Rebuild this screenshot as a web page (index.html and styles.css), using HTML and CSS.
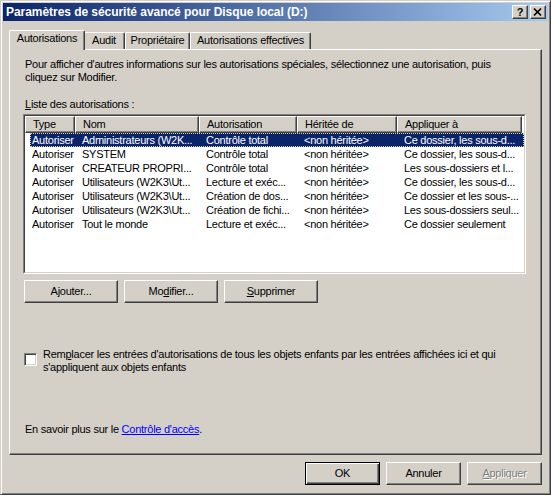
FILE: index.html
```html
<!DOCTYPE html>
<html lang="fr">
<head>
<meta charset="utf-8">
<title>Paramètres de sécurité avancé</title>
<link rel="stylesheet" href="styles.css">
</head>
<body>
<div class="window">
  <div class="titlebar">
    <span class="title">Paramètres de sécurité avancé pour Disque local (D:)</span>
    <div class="caption-btns">
      <span class="cap-btn help">?</span>
      <span class="cap-btn close"><svg width="14" height="12" viewBox="0 0 14 12"><path d="M3 2.5 L10 9.5 M10 2.5 L3 9.5" stroke="#000" stroke-width="1.7" fill="none"/></svg></span>
    </div>
  </div>
  <div class="client">
    <div class="tabs">
      <div class="tab sel t1">Autorisations</div>
      <div class="tab t2">Audit</div>
      <div class="tab t3">Propriétaire</div>
      <div class="tab t4">Autorisations effectives</div>
    </div>
    <div class="panel">
      <p class="desc">Pour afficher d'autres informations sur les autorisations spéciales, sélectionnez une autorisation, puis<br>cliquez sur Modifier.</p>
      <div class="label"><u>L</u>iste des autorisations :</div>
      <div class="list">
        <div class="list-inner">
          <div class="header">
            <div class="hcell">Type</div>
            <div class="hcell">Nom</div>
            <div class="hcell">Autorisation</div>
            <div class="hcell">Héritée de</div>
            <div class="hcell">Appliquer à</div>
          </div>
          <div class="rows">
            <div class="row sel"><span>Autoriser</span><span>Administrateurs (W2K...</span><span>Contrôle total</span><span>&lt;non héritée&gt;</span><span>Ce dossier, les sous-d...</span></div>
            <div class="row"><span>Autoriser</span><span>SYSTEM</span><span>Contrôle total</span><span>&lt;non héritée&gt;</span><span>Ce dossier, les sous-d...</span></div>
            <div class="row"><span>Autoriser</span><span>CREATEUR PROPRI...</span><span>Contrôle total</span><span>&lt;non héritée&gt;</span><span>Les sous-dossiers et l...</span></div>
            <div class="row"><span>Autoriser</span><span>Utilisateurs (W2K3\Ut...</span><span>Lecture et exéc...</span><span>&lt;non héritée&gt;</span><span>Ce dossier, les sous-d...</span></div>
            <div class="row"><span>Autoriser</span><span>Utilisateurs (W2K3\Ut...</span><span>Création de dos...</span><span>&lt;non héritée&gt;</span><span>Ce dossier et les sous-...</span></div>
            <div class="row"><span>Autoriser</span><span>Utilisateurs (W2K3\Ut...</span><span>Création de fichi...</span><span>&lt;non héritée&gt;</span><span>Les sous-dossiers seul...</span></div>
            <div class="row"><span>Autoriser</span><span>Tout le monde</span><span>Lecture et exéc...</span><span>&lt;non héritée&gt;</span><span>Ce dossier seulement</span></div>
          </div>
        </div>
      </div>
      <div class="btn-row">
        <button class="btn wide">A<u>j</u>outer...</button>
        <button class="btn wide">Mo<u>d</u>ifier...</button>
        <button class="btn wide"><u>S</u>upprimer</button>
      </div>
      <div class="check-row">
        <span class="checkbox"></span>
        <span class="check-label">Rem<u>p</u>lacer les entrées d'autorisations de tous les objets enfants par les entrées affichées ici et qui<br>s'appliquent aux objets enfants</span>
      </div>
      <div class="info">En savoir plus sur le <a class="link" href="#">Contrôle d'accès</a>.</div>
    </div>
    <div class="dlg-btns">
      <button class="btn default">OK</button>
      <button class="btn">Annuler</button>
      <button class="btn disabled"><u>A</u>ppliquer</button>
    </div>
  </div>
</div>
</body>
</html>
```
FILE: styles.css
```css
* { box-sizing: border-box; }
html, body { margin: 0; padding: 0; background: #d4d0c8; }
body {
  font-family: "Liberation Sans", Arial, sans-serif;
  font-size: 11px;
  line-height: 13px;
  letter-spacing: -0.25px;
  color: #000;
}
.window {
  width: 551px;
  height: 495px;
  background: #d4d0c8;
  border: 1px solid;
  border-color: #d4d0c8 #404040 #404040 #d4d0c8;
  box-shadow: inset 1px 1px #fff, inset -1px -1px #808080;
  padding: 2px;
  display: flex;
  flex-direction: column;
}
.titlebar {
  height: 18px;
  flex: none;
  background: linear-gradient(to right, #0a246a, #a6caf0);
  display: flex;
  align-items: flex-start;
  justify-content: space-between;
  padding-left: 3px;
  padding-right: 2px;
}
.title {
  color: #fff;
  font-weight: bold;
  font-size: 12px;
  letter-spacing: -0.05px;
  line-height: 18px;
  white-space: nowrap;
}
.caption-btns {
  display: flex;
  gap: 2px;
  margin-top: 2px;
}
.cap-btn {
  width: 16px;
  height: 14px;
  background: #d4d0c8;
  border: 1px solid;
  border-color: #fff #404040 #404040 #fff;
  box-shadow: inset -1px -1px #808080;
  display: flex;
  align-items: center;
  justify-content: center;
}
.help {
  font-weight: bold;
  font-size: 11px;
  line-height: 12px;
  letter-spacing: 0;
  padding-bottom: 1px;
}
.close svg { display: block; }
.client {
  flex: 1;
  padding: 9px 6px 0 6px;
  display: flex;
  flex-direction: column;
}
.tabs {
  display: flex;
  align-items: flex-end;
  height: 19px;
  padding-left: 2px;
  position: relative;
  z-index: 2;
}
.tab {
  height: 17px;
  border-top: 1px solid #fff;
  border-left: 1px solid #fff;
  border-right: 1px solid #404040;
  box-shadow: inset -1px 0 #808080;
  border-top-left-radius: 2px;
  border-top-right-radius: 2px;
  padding-top: 1px;
  text-align: center;
  white-space: nowrap;
  background: #d4d0c8;
  align-self: flex-end;
}
.t1 { width: 72px; }
.t2 { width: 42px; }
.t3 { width: 65px; }
.t4 { width: 121px; }
.tab.sel {
  width: 76px;
  height: 20px;
  margin: 0 -2px -1px -2px;
  position: relative;
  z-index: 3;
}
.panel {
  height: 406px;
  border: 1px solid;
  border-color: #fff #404040 #404040 #fff;
  box-shadow: inset -1px -1px #808080;
  padding: 8px 14px 0 14px;
  display: flex;
  flex-direction: column;
  align-items: flex-start;
}
.desc {
  margin: 0 0 0 1px;
  white-space: nowrap;
}
.label {
  margin-top: 14px;
  margin-left: 1px;
}
.list {
  margin-top: 3px;
  margin-left: -1px;
  width: 503px;
  height: 160px;
  border: 1px solid;
  border-color: #808080 #fff #fff #808080;
}
.list-inner {
  height: 100%;
  border: 1px solid;
  border-color: #404040 #d4d0c8 #d4d0c8 #404040;
  background: #fff;
  overflow: hidden;
}
.header {
  display: grid;
  grid-template-columns: 50px 124px 98px 100px 125px;
  height: 17px;
}
.hcell {
  height: 17px;
  background: #d4d0c8;
  border: 1px solid;
  border-color: #fff #404040 #404040 #fff;
  box-shadow: inset -1px -1px #808080;
  padding: 1px 0 0 7px;
  white-space: nowrap;
  overflow: hidden;
}
.rows { display: flex; flex-direction: column; }
.row {
  margin-left: 5px;
  display: grid;
  grid-template-columns: 45px 124px 98px 100px 125px;
  height: 14px;
  line-height: 14px;
}
.row span {
  white-space: nowrap;
  overflow: hidden;
  padding-left: 7px;
}
.row span:first-child { padding-left: 2px; }
.row.sel {
  background: #0a246a;
  color: #fff;
  outline: 1px dotted #d8d0a0;
  outline-offset: -1px;
}
.btn-row {
  display: flex;
  gap: 6px;
  margin-top: 6px;
}
.btn {
  font-family: "Liberation Sans", Arial, sans-serif;
  font-size: 11px;
  line-height: 13px;
  letter-spacing: -0.25px;
  color: #000;
  width: 75px;
  height: 23px;
  padding: 0;
  margin: 0;
  background: #d4d0c8;
  border: 1px solid;
  border-color: #fff #404040 #404040 #fff;
  border-radius: 0;
  box-shadow: inset -1px -1px #808080;
}
.btn.wide { width: 94px; }
.btn.default {
  border-color: #000;
  box-shadow: inset 1px 1px #fff, inset -1px -1px #404040, inset -2px -2px #808080;
}
.btn.disabled {
  color: #808080;
  text-shadow: 1px 1px #fff;
}
.check-row {
  display: flex;
  gap: 6px;
  margin-top: 45px;
}
.checkbox {
  flex: none;
  width: 13px;
  height: 13px;
  margin-top: 5px;
  background: #fff;
  border: 1px solid;
  border-color: #808080 #fff #fff #808080;
  box-shadow: inset 1px 1px #404040, inset -1px -1px #d4d0c8;
}
.check-label { white-space: nowrap; }
.info {
  margin-top: 49px;
  margin-left: 1px;
}
.link { color: #0000ff; text-decoration: underline; }
.dlg-btns {
  display: flex;
  justify-content: flex-end;
  gap: 6px;
  margin-top: 7px;
}
```
